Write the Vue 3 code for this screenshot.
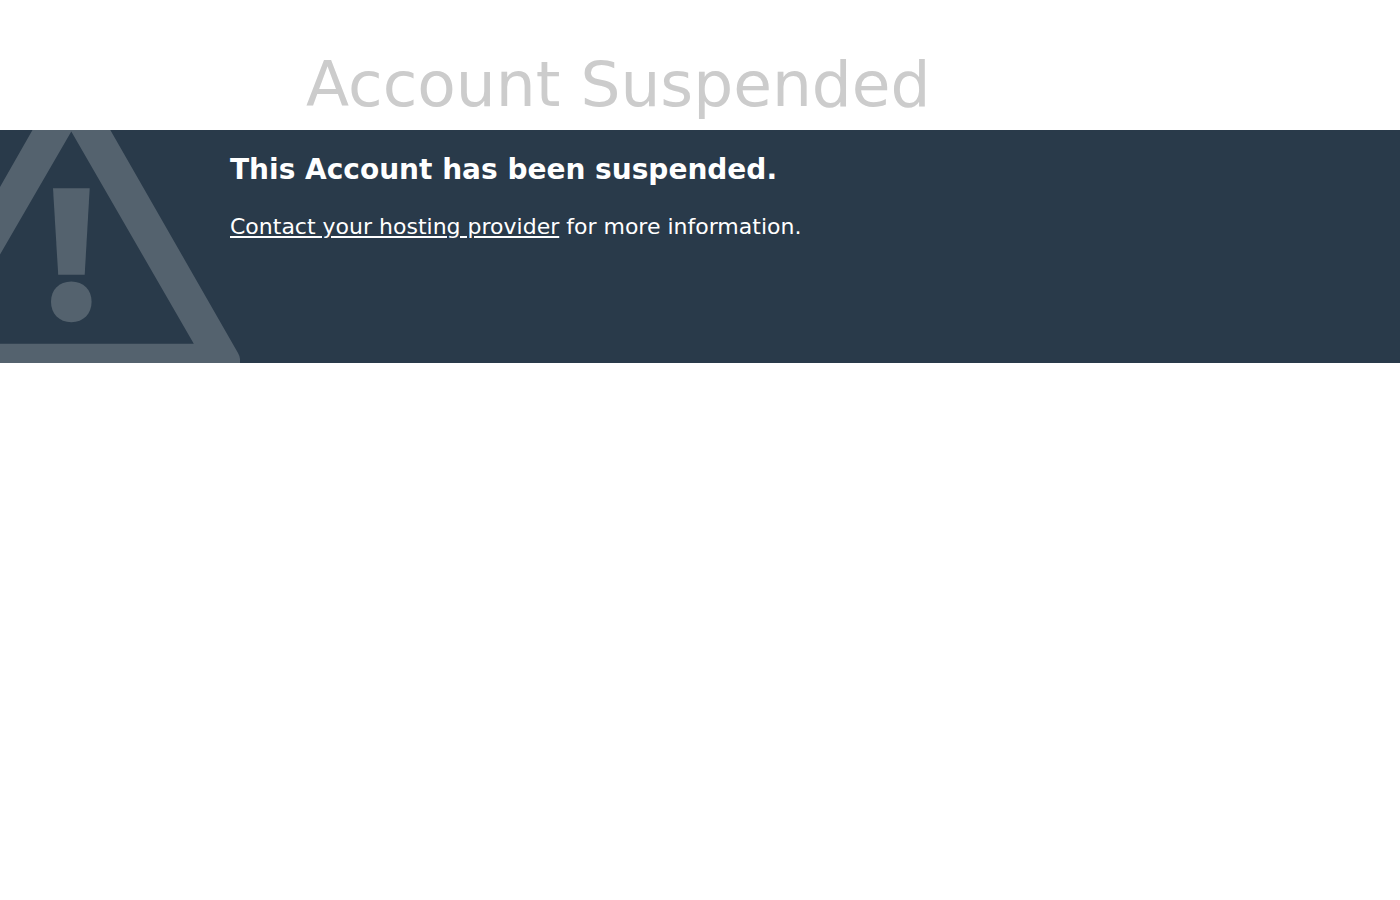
<script setup>
const title = 'Account Suspended'
</script>

<template>
  <div class="page">
    <header class="heading">
      <h1>{{ title }}</h1>
    </header>
    <main class="banner">
      <svg class="warning" viewBox="0 0 240 233" aria-hidden="true">
        <path fill-rule="evenodd" d="M32.5 0H110.3L238 223Q240 226.5 240 229V233H0V213.8H193.8L71.3 1.5L0 124.5V57Z" />
        <path d="M53 58.3H89.7L84.7 144.8H58.2Z" />
        <path d="M71.3 151.6C83.5 151.6 91.6 160 91.6 171.8C91.6 183.8 83.5 192.2 71.3 192.2C59.1 192.2 51 183.8 51 171.8C51 160 59.1 151.6 71.3 151.6Z" />
      </svg>
      <section class="message">
        <h2>This Account has been suspended.</h2>
        <p><a href="#contact">Contact your hosting provider</a> for more information.</p>
      </section>
    </main>
  </div>
</template>

<style>
body {
  margin: 0;
  background: #fff;
}
</style>

<style scoped>
.page {
  font-family: "DejaVu Sans", sans-serif;
  color: #fff;
}
.heading {
  padding: 48px 0 8px 306px;
}
h1 {
  margin: 0;
  color: #ccc;
  font-size: 63px;
  line-height: 74px;
  font-weight: 400;
}
.banner {
  display: flex;
  background: #293a4a;
}
.warning {
  flex: none;
  width: 240px;
  height: 233px;
  margin-right: -10px;
  fill: #54626e;
}
.message {
  padding-top: 23px;
}
h2 {
  margin: 0 0 24px;
  font-size: 28px;
  line-height: 34px;
}
p {
  margin: 0;
  font-size: 22px;
  line-height: 32px;
}
a {
  color: inherit;
}
</style>
